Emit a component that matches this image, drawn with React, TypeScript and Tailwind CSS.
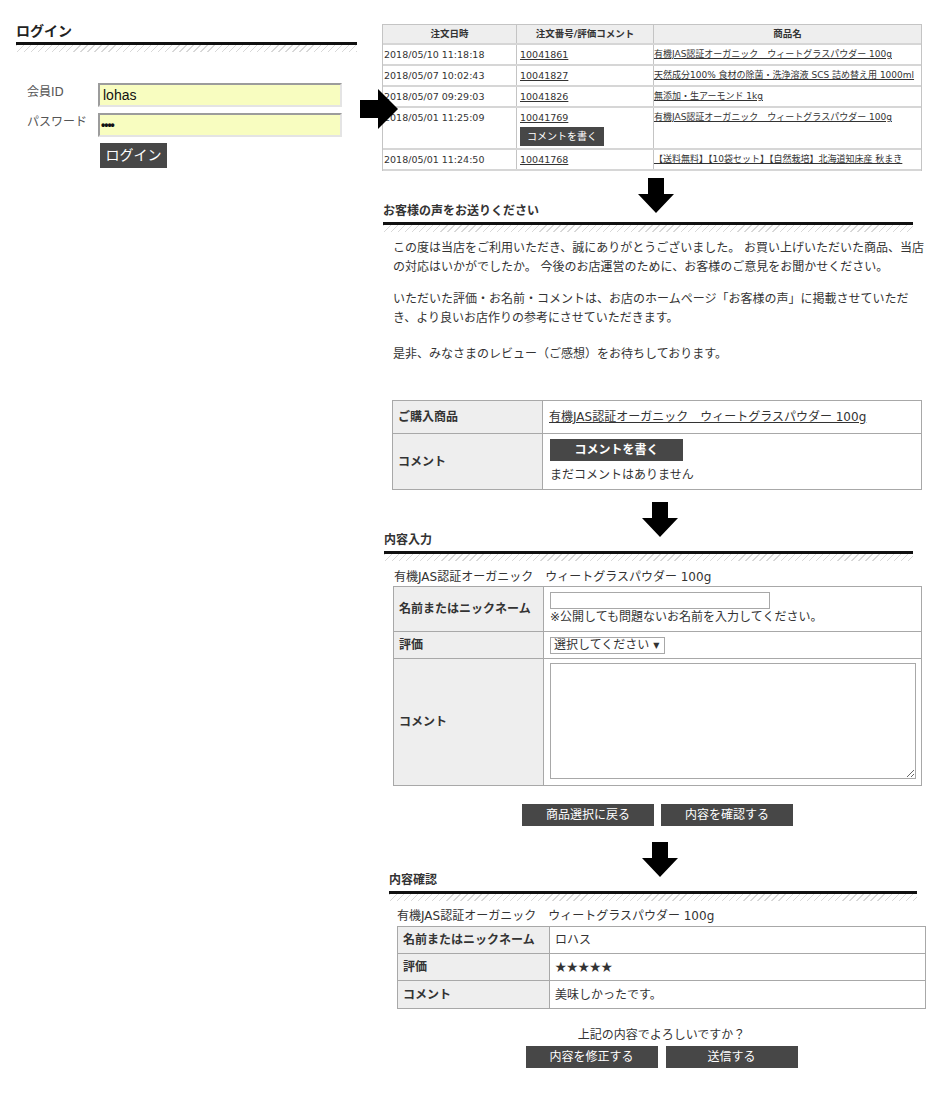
import React from "react";

const FONT = "[font-family:'DejaVu_Sans','Noto_Sans_CJK_JP',sans-serif]";
const HATCH =
  "bg-[repeating-linear-gradient(135deg,#d8d8d8_0px,#d8d8d8_1px,transparent_1px,transparent_5px)]";
const BTN = "bg-[#474747] text-white";

const PRODUCT = "有機JAS認証オーガニック　ウィートグラスパウダー 100g";

function DownArrow({ className }: { className?: string }) {
  return (
    <svg className={className} width="36" height="35" viewBox="0 0 36 35">
      <path d="M10 0H26V16H36L18 35L0 16H10Z" fill="#000" />
    </svg>
  );
}

function RightArrow({ className }: { className?: string }) {
  return (
    <svg className={className} width="38" height="40" viewBox="0 0 38 40">
      <path d="M0 11H18V0L38 20L18 40V29H0Z" fill="#000" />
    </svg>
  );
}

function Heading({
  children,
  className,
  arrow,
}: {
  children: React.ReactNode;
  className?: string;
  arrow?: string;
}) {
  return (
    <div className={`relative ${className ?? ""}`}>
      {arrow && <DownArrow className={`absolute ${arrow}`} />}
      <div className="h-[16px] text-[12px] font-bold leading-[16px] text-[#333]">{children}</div>
      <div className="mt-[3px] h-[3px] bg-[#111]" />
      <div className={`h-[7px] ${HATCH}`} />
    </div>
  );
}

const orders: [string, string, string, boolean?][] = [
  ["2018/05/10 11:18:18", "10041861", PRODUCT],
  ["2018/05/07 10:02:43", "10041827", "天然成分100% 食材の除菌・洗浄溶液 SCS 詰め替え用 1000ml"],
  ["2018/05/07 09:29:03", "10041826", "無添加・生アーモンド 1kg"],
  ["2018/05/01 11:25:09", "10041769", PRODUCT, true],
  ["2018/05/01 11:24:50", "10041768", "【送料無料】【10袋セット】【自然栽培】北海道知床産 秋まき"],
];

function OrderTable() {
  return (
    <div className="mt-[24px] h-[147px] overflow-hidden">
      <div className="w-[540px] border-l border-r border-t border-[#c4c4c4] text-[9.5px] text-[#333]">
        <div className="flex h-[20px] border-b-2 border-[#d6d6d6] bg-[#eeeeee] font-bold">
          <div className="flex w-[134px] items-center justify-center border-r border-[#c4c4c4]">注文日時</div>
          <div className="flex w-[137px] items-center justify-center border-r border-[#c4c4c4]">注文番号/評価コメント</div>
          <div className="flex flex-1 items-center justify-center">商品名</div>
        </div>
        {orders.map(([d, n, p, btn]) => (
          <div
            key={n}
            className={`flex border-b-2 border-[#d6d6d6] ${btn ? "h-[42px]" : "h-[21px]"}`}
          >
            <div className="w-[134px] shrink-0 border-r border-[#c4c4c4] pl-[1px] pt-[3px] leading-[13px] whitespace-nowrap">
              {d}
            </div>
            <div className="w-[137px] shrink-0 border-r border-[#c4c4c4] pl-[3px] pt-[3px] leading-[13px]">
              <span className="underline">{n}</span>
              {btn && (
                <div className={`mt-[3px] flex h-[19px] w-[84px] items-center justify-center text-[10px] ${BTN}`}>
                  コメントを書く
                </div>
              )}
            </div>
            <div className="min-w-0 flex-1 overflow-hidden pt-[3px] text-[9px] leading-[13px] whitespace-nowrap">
              <span className="underline">{p}</span>
            </div>
          </div>
        ))}
      </div>
    </div>
  );
}

function Login() {
  return (
    <div className="w-[382px] shrink-0 pl-[16px] pt-[22px]">
      <div className="w-[341px]">
        <div className="h-[20px] text-[14px] font-bold leading-[18px] text-[#222]">ログイン</div>
        <div className="h-[3px] bg-[#111]" />
        <div className={`h-[7px] ${HATCH}`} />
      </div>
      <div className="ml-[11px] mt-[31px] grid grid-cols-[71px_244px] items-start gap-y-[6px]">
        <div className="pt-[1px] text-[12px] leading-[16px] text-[#555]">会員ID</div>
        <div className="flex h-[24px] items-center border-2 border-t-[#9c9c9c] border-l-[#9c9c9c] border-b-[#e4e4e4] border-r-[#e4e4e4] bg-[#f8fdc0] pl-[3px] text-[14px] text-[#111] [font-family:'Liberation_Sans',sans-serif]">
          lohas
        </div>
        <div className="pt-[1px] text-[12px] leading-[16px] text-[#555]">パスワード</div>
        <div className="flex h-[24px] items-center border-2 border-t-[#9c9c9c] border-l-[#9c9c9c] border-b-[#e4e4e4] border-r-[#e4e4e4] bg-[#f8fdc0] pl-[1px] text-[12px] font-bold tracking-[-1px] text-[#111] [font-family:'Liberation_Sans',sans-serif]">
          ••••
        </div>
        <div />
        <div className={`ml-[2px] flex h-[25px] w-[67px] items-center justify-center text-[14px] ${BTN}`}>
          ログイン
        </div>
      </div>
    </div>
  );
}

function Btn({ children }: { children: React.ReactNode }) {
  return (
    <div className={`flex h-[22px] w-[132px] items-center justify-center text-[12px] ${BTN}`}>
      {children}
    </div>
  );
}

export default function App() {
  return (
    <div className={`relative flex h-[1100px] w-[940px] bg-white text-[#333] ${FONT}`}>
      <Login />
      <RightArrow className="absolute left-[360px] top-[89px]" />
      <div className="w-[540px] shrink-0">
        <OrderTable />

        <Heading className="ml-[1px] mt-[32px] w-[530px]" arrow="left-[255px] top-[-25px]">
          お客様の声をお送りください
        </Heading>
        <div className="ml-[11px] mt-[7px] text-[12px] leading-[19px] whitespace-nowrap">
          <div>この度は当店をご利用いただき、誠にありがとうございました。 お買い上げいただいた商品、当店</div>
          <div>の対応はいかがでしたか。 今後のお店運営のために、お客様のご意見をお聞かせください。</div>
          <div className="mt-[13px]">いただいた評価・お名前・コメントは、お店のホームページ「お客様の声」に掲載させていただ</div>
          <div>き、より良いお店作りの参考にさせていただきます。</div>
          <div className="mt-[17px]">是非、みなさまのレビュー（ご感想）をお待ちしております。</div>
        </div>

        <div className="ml-[10px] mt-[36px] w-[530px] border border-[#a8a8a8] text-[12px]">
          <div className="flex h-[33px] border-b border-[#a8a8a8]">
            <div className="flex w-[150px] items-center border-r border-[#a8a8a8] bg-[#eeeeee] pl-[5px] font-bold">
              ご購入商品
            </div>
            <div className="flex flex-1 items-center pl-[6px]">
              <span className="underline">{PRODUCT}</span>
            </div>
          </div>
          <div className="flex h-[55px]">
            <div className="flex w-[150px] items-center border-r border-[#a8a8a8] bg-[#eeeeee] pl-[5px] font-bold">
              コメント
            </div>
            <div className="flex-1 pl-[7px] pt-[5px]">
              <div className={`flex h-[22px] w-[133px] items-center justify-center font-bold ${BTN}`}>
                コメントを書く
              </div>
              <div className="mt-[6px] leading-[16px]">まだコメントはありません</div>
            </div>
          </div>
        </div>

        <Heading className="ml-[2px] mt-[42px] w-[529px]" arrow="left-[258px] top-[-30px]">
          内容入力
        </Heading>
        <div className="ml-[12px] mt-[8px] text-[12px] leading-[16px]">{PRODUCT}</div>
        <div className="ml-[11px] mt-[1px] w-[529px] border border-[#a8a8a8] text-[12px]">
          <div className="flex h-[45px] border-b border-[#a8a8a8]">
            <div className="flex w-[150px] items-center border-r border-[#a8a8a8] bg-[#eeeeee] pl-[5px] font-bold">
              名前またはニックネーム
            </div>
            <div className="flex-1 pl-[6px] pt-[5px]">
              <div className="h-[17px] w-[220px] border border-[#a8a8a8] bg-white" />
              <div className="leading-[16px]">※公開しても問題ないお名前を入力してください。</div>
            </div>
          </div>
          <div className="flex h-[27px] border-b border-[#a8a8a8]">
            <div className="flex w-[150px] items-center border-r border-[#a8a8a8] bg-[#eeeeee] pl-[5px] font-bold">
              評価
            </div>
            <div className="flex flex-1 items-center pl-[6px]">
              <div className="flex h-[17px] w-[115px] items-center border border-[#a8a8a8] bg-white pl-[3px] leading-[15px]">
                選択してください
                <span className="ml-[4px] text-[8px]">▼</span>
              </div>
            </div>
          </div>
          <div className="flex h-[126px]">
            <div className="flex w-[150px] items-center border-r border-[#a8a8a8] bg-[#eeeeee] pl-[5px] font-bold">
              コメント
            </div>
            <div className="flex-1 pl-[6px] pt-[4px]">
              <textarea
                className="block h-[116px] w-[366px] border border-[#a8a8a8] bg-white outline-none"
                defaultValue=""
              />
            </div>
          </div>
        </div>

        <div className="ml-[140px] mt-[18px] flex w-[271px] gap-[7px]">
          <Btn>商品選択に戻る</Btn>
          <Btn>内容を確認する</Btn>
        </div>

        <Heading className="ml-[7px] mt-[46px] w-[528px]" arrow="left-[253px] top-[-30px]">
          内容確認
        </Heading>
        <div className="ml-[15px] mt-[7px] text-[12px] leading-[16px]">{PRODUCT}</div>
        <div className="ml-[15px] mt-[2px] w-[529px] border border-[#a8a8a8] text-[12px]">
          <div className="flex h-[27px] border-b border-[#a8a8a8]">
            <div className="flex w-[152px] items-center border-r border-[#a8a8a8] bg-[#eeeeee] pl-[5px] font-bold">
              名前またはニックネーム
            </div>
            <div className="flex flex-1 items-center pl-[5px]">ロハス</div>
          </div>
          <div className="flex h-[27px] border-b border-[#a8a8a8]">
            <div className="flex w-[152px] items-center border-r border-[#a8a8a8] bg-[#eeeeee] pl-[5px] font-bold">
              評価
            </div>
            <div className="flex flex-1 items-center pl-[5px] text-[11.5px] [font-family:'Noto_Sans_CJK_JP',sans-serif]">
              ★★★★★
            </div>
          </div>
          <div className="flex h-[27px]">
            <div className="flex w-[152px] items-center border-r border-[#a8a8a8] bg-[#eeeeee] pl-[5px] font-bold">
              コメント
            </div>
            <div className="flex flex-1 items-center pl-[5px]">美味しかったです。</div>
          </div>
        </div>

        <div className="ml-[144px] mt-[18px] flex w-[271px] flex-col items-center">
          <div className="text-[12px] leading-[16px]">上記の内容でよろしいですか？</div>
          <div className="mt-[3px] flex gap-[8px]">
            <Btn>内容を修正する</Btn>
            <Btn>送信する</Btn>
          </div>
        </div>
      </div>
    </div>
  );
}
